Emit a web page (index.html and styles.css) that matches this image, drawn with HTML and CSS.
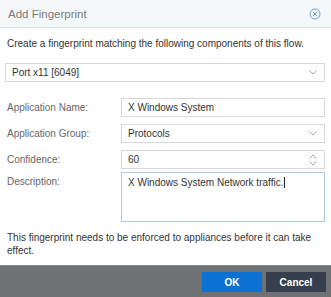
FILE: index.html
```html
<!DOCTYPE html>
<html lang="en">
<head>
  <meta charset="UTF-8">
  <title>Add Fingerprint</title>
  <link rel="stylesheet" href="styles.css">
</head>
<body>
  <div class="dialog">
    <div class="dialog-header">
      <span class="dialog-title">Add Fingerprint</span>
      <svg class="close-icon" width="12" height="12" viewBox="0 0 12 12">
        <circle cx="6" cy="6" r="5" fill="none" stroke="#6e9fd6" stroke-width="1"/>
        <path d="M4 4 L8 8 M8 4 L4 8" stroke="#6e9fd6" stroke-width="1" fill="none"/>
      </svg>
    </div>

    <div class="dialog-body">
      <p class="intro">Create a fingerprint matching the following components of this flow.</p>

      <div class="field select-wide">
        <span>Port x11 [6049]</span>
        <svg class="chevron" width="8" height="5" viewBox="0 0 8 5">
          <path d="M0.5 0.5 L4 4 L7.5 0.5" fill="none" stroke="#a4a4a4" stroke-width="1"/>
        </svg>
      </div>

      <div class="form">
        <div class="form-row">
          <label class="form-label">Application Name:</label>
          <div class="field">X Windows System</div>
        </div>
        <div class="form-row">
          <label class="form-label">Application Group:</label>
          <div class="field">
            <span>Protocols</span>
            <svg class="chevron" width="8" height="5" viewBox="0 0 8 5">
              <path d="M0.5 0.5 L4 4 L7.5 0.5" fill="none" stroke="#a4a4a4" stroke-width="1"/>
            </svg>
          </div>
        </div>
        <div class="form-row tight">
          <label class="form-label">Confidence:</label>
          <div class="field">
            <span>60</span>
            <svg class="spinner" width="8" height="12" viewBox="0 0 8 12">
              <path d="M0.5 4.5 L4 1 L7.5 4.5 M0.5 7.5 L4 11 L7.5 7.5" fill="none" stroke="#a4a4a4" stroke-width="1"/>
            </svg>
          </div>
        </div>
        <div class="form-row top">
          <label class="form-label">Description:</label>
          <div class="field textarea">X Windows System Network traffic.<span class="caret"></span></div>
        </div>
      </div>

      <p class="note">This fingerprint needs to be enforced to appliances before it can take effect.</p>
    </div>

    <div class="dialog-footer">
      <button class="btn btn-ok">OK</button>
      <button class="btn btn-cancel">Cancel</button>
    </div>
  </div>
</body>
</html>
```

FILE: styles.css
```css
body {
  margin: 0;
  font-family: "Liberation Sans", Arial, sans-serif;
  background-color: #fff;
  color: #333;
}
.dialog {
  width: 331px;
  height: 297px;
  display: flex;
  flex-direction: column;
  overflow: hidden;
}
.dialog-header {
  height: 27px;
  background-color: #f4f7f8;
  border-bottom: 1px solid #dfe3e6;
  display: flex;
  align-items: center;
  justify-content: space-between;
  padding: 0 10px 0 8px;
}
.dialog-title {
  font-size: 11.5px;
  color: #7a7a7a;
}
.close-icon {
  display: block;
  margin-top: 1px;
}
.dialog-body {
  flex: 1;
  padding: 10px 6px 0 5px;
}
.intro {
  margin: 0 0 13px 2px;
  font-size: 10px;
  line-height: 12px;
}
.field {
  flex: 1;
  height: 19px;
  box-sizing: border-box;
  border: 1px solid #d8d8d8;
  background-color: #fff;
  font-size: 10px;
  color: #333;
  display: flex;
  align-items: center;
  justify-content: space-between;
  padding: 0 6px 0 6px;
}
.select-wide {
  padding-left: 6px;
}
.chevron {
  display: block;
  margin-right: 1px;
}
.spinner {
  display: block;
  margin-right: 1px;
}
.form {
  margin-top: 16px;
  display: flex;
  flex-direction: column;
}
.form-row {
  display: flex;
  align-items: center;
  margin-bottom: 7px;
}
.form-row.tight {
  margin-bottom: 3px;
}
.form-row.top {
  align-items: flex-start;
  margin-bottom: 0;
}
.form-label {
  width: 114px;
  padding-left: 2px;
  font-size: 10px;
  color: #666;
}
.form-row.top .form-label {
  margin-top: 4px;
}
.textarea {
  height: 50px;
  align-items: flex-start;
  justify-content: flex-start;
  border-color: #a9cbe9;
  padding-top: 4px;
}
.caret {
  display: inline-block;
  width: 1px;
  height: 11px;
  background-color: #222;
  margin-left: 1px;
}
.note {
  margin: 9px 0 0 2px;
  font-size: 10px;
  line-height: 13px;
}
.dialog-footer {
  height: 32px;
  box-sizing: border-box;
  background-color: #707174;
  border-top: 1px solid #8a8b8e;
  display: flex;
  justify-content: flex-end;
  align-items: flex-start;
  gap: 4px;
  padding: 6px 5px 0 0;
}
.btn {
  width: 60px;
  height: 20px;
  border: none;
  color: #fff;
  font-family: "Liberation Sans", Arial, sans-serif;
  font-size: 10px;
  font-weight: bold;
  cursor: pointer;
}
.btn-ok {
  background-color: #0b72d3;
}
.btn-cancel {
  background-color: #363f4b;
}
```
